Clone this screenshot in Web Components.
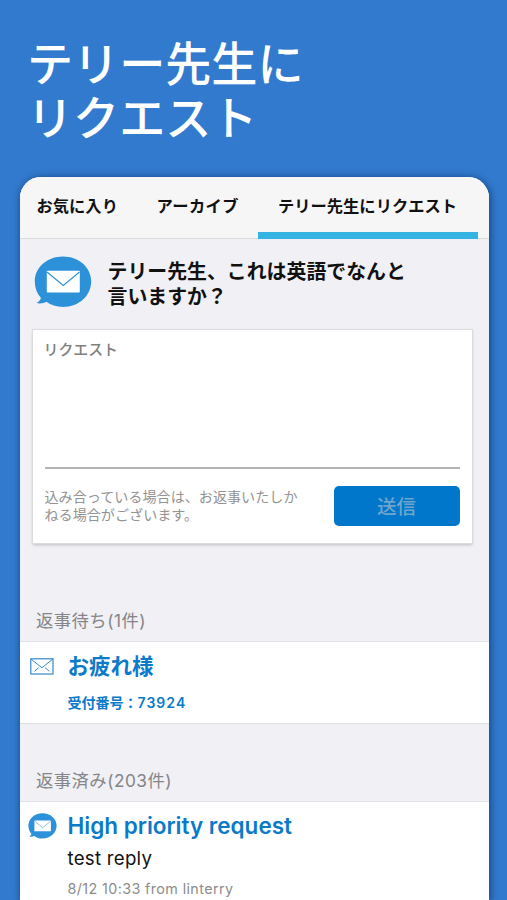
<!DOCTYPE html>
<html lang="ja">
<head>
<meta charset="utf-8">
<title>テリー先生にリクエスト</title>
<style>
html,body{margin:0;height:900px;overflow:hidden;background:#327ace}
body{font-family:Inter,"Noto Sans CJK JP",sans-serif;-webkit-font-smoothing:antialiased}
</style>
</head>
<body>
<promo-screen>
  <promo-title slot="title">テリー先生に<br>リクエスト</promo-title>
  <app-panel>
    <tab-bar slot="tabs">
      <tab-item style="margin-left:17px;width:120px">お気に入り</tab-item>
      <tab-item style="width:101px;letter-spacing:.4px">アーカイブ</tab-item>
      <tab-item active style="width:220px">テリー先生にリクエスト</tab-item>
    </tab-bar>
    <question-header>テリー先生、これは英語でなんと<br>言いますか？</question-header>
    <request-card>
      <span slot="label">リクエスト</span>
      <span slot="note">込み合っている場合は、お返事いたしか<br>ねる場合がございます。</span>
      <span slot="action">送信</span>
    </request-card>
    <reply-section style="margin-top:57px">
      <span slot="heading">返事待ち(1件)</span>
      <request-row kind="waiting">
        <span slot="name">お疲れ様</span>
        <span slot="number">受付番号：<span style="letter-spacing:1.050px">73924</span></span>
      </request-row>
    </reply-section>
    <reply-section style="margin-top:36px">
      <span slot="heading">返事済み(203件)</span>
      <request-row kind="answered">
        <span slot="name">High priority request</span>
        <span slot="reply">test reply</span>
        <span slot="meta">8/12 10:33 from linterry</span>
      </request-row>
    </reply-section>
  </app-panel>
</promo-screen>

<script>
function define(name, html) {
  const t = document.createElement('template');
  t.innerHTML = html;
  customElements.define(name, class extends HTMLElement {
    constructor() {
      super();
      this.attachShadow({mode: 'open'}).appendChild(t.content.cloneNode(true));
    }
  });
}

define('promo-screen', `
<style>:host{display:flex;flex-direction:column;height:900px;overflow:hidden;background:#327ace}</style>
<slot name="title"></slot><slot></slot>`);

define('promo-title', `
<style>:host{display:block;box-sizing:border-box;flex:none;height:177px;padding:37px 0 0 27px;color:#fff;font-size:46.100px;font-weight:500;line-height:54px;white-space:nowrap}</style>
<slot></slot>`);

define('app-panel', `
<style>
:host{display:flex;flex-direction:column;flex:1;min-height:0;width:469px;margin-left:19.5px;border-radius:21px 21px 0 0;overflow:hidden;background:#f0f0f5;box-shadow:1px 1px 7px 1px rgba(8,40,90,.6),inset 1px 0 #e7f1fb,inset -1px 0 #e7f1fb}
::slotted(*){flex:none}
</style>
<slot name="tabs"></slot><slot></slot>`);

define('tab-bar', `
<style>:host{display:flex;height:61px;background:#f6f6f6;border-bottom:1px solid #dcdcde;flex:none}</style>
<slot></slot>`);

define('tab-item', `
<style>
:host{display:block;box-sizing:border-box;height:62px;padding-top:17px;font-size:16.3px;line-height:24px;font-weight:600;color:#111;white-space:nowrap}
:host([active]){text-align:center;border-bottom:7px solid #35b3e3}
</style>
<slot></slot>`);

define('mail-bubble', `
<style>:host{display:block}svg{display:block;width:100%;height:100%}</style>
<svg viewBox="0 0 58 52">
  <path fill="#2c91d9" d="M29 .5C45 .5 57.2 11.500 57.200 25.500S45 51 29 51c-6.500 0-12.300-2-16.500-5.200-3 1.500-6.600 2-10 1.200 2.200-1.100 3.800-2.800 4.500-5C3 37.500.8 32 .8 25.500.8 11.500 13 .5 29 .5z"/>
  <rect x="12.800" y="14.800" width="33" height="21.800" rx=".8" fill="#fff"/>
  <path d="M13 16l16.300 13.500L45.500 16" fill="none" stroke="#2c91d9" stroke-width="1.100"/>
</svg>`);

define('mail-outline', `
<style>:host{display:block}svg{display:block;width:100%;height:100%}</style>
<svg viewBox="0 0 24 17" fill="none" stroke="#3488ca">
  <rect x=".8" y=".8" width="22.200" height="15.200" stroke-width="1.200"/>
  <path d="M1.200 1.200l10.700 8.600 10.800-8.600M4.500 13.300l4.300-3.700M19.300 13.300L15 9.600" stroke-width="1"/>
</svg>`);

define('question-header', `
<style>
:host{display:flex;box-sizing:border-box;align-items:flex-start;height:91px;padding:17px 0 0 14px;color:#111;font-size:19.9px;font-weight:600;line-height:25px;white-space:nowrap}
mail-bubble{width:58px;height:52px;flex:none;margin-right:16px}
div{margin-top:4px}
</style>
<mail-bubble></mail-bubble><div><slot></slot></div>`);

define('request-card', `
<style>
:host{display:block;box-sizing:border-box;width:439px;height:213px;margin:0 0 0 13px;padding:0 12px;background:#fff;box-shadow:0 0 1px 1px #dcdce0,0 2px 3px rgba(0,0,0,.22)}
.field{box-sizing:border-box;height:137px;margin:0 0 0 -1px;padding:8px 0 0;font-size:14.900px;line-height:24px;font-weight:500;color:#808080}
.rule{height:1.500px;background:#b4b4b4}
.foot{display:flex;justify-content:space-between;padding-top:17.500px}
.note{font-size:14.100px;line-height:18px;color:#939393;white-space:nowrap;padding-top:2px}
button{width:126px;height:40px;padding:0;border:0;border-radius:5px;background:#0077cb;color:#6fa5cd;font:500 19.500px/42px Inter,"Noto Sans CJK JP",sans-serif}
</style>
<div class="field"><slot name="label"></slot></div>
<div class="rule"></div>
<div class="foot"><div class="note"><slot name="note"></slot></div><button><slot name="action"></slot></button></div>`);

define('reply-section', `
<style>
:host{display:block}
.heading{height:41px;padding-left:16.500px;font-size:17.300px;letter-spacing:.5px;line-height:42px;color:#858589;white-space:nowrap}
</style>
<div class="heading"><slot name="heading"></slot></div><slot></slot>`);

customElements.define('request-row', class extends HTMLElement {
  connectedCallback() {
    if (this.shadowRoot) return;
    const waiting = this.getAttribute('kind') === 'waiting';
    this.attachShadow({mode: 'open'}).innerHTML = `
<style>
:host{display:flex;box-sizing:border-box;height:${waiting ? 83 : 130}px;background:#fff;border-top:1px solid #e2e2e7;border-bottom:1px solid #dedee2;white-space:nowrap}
.icon{width:48px;flex:none}
mail-outline{width:24px;height:17px;margin:16px 0 0 10.500px}
mail-bubble{width:29px;height:26px;margin:11px 0 0 8px}
.name{height:36px;padding-top:6px;font-size:${waiting ? 21.5 : 22.5}px;line-height:36px;font-weight:600;color:#0b7ac8}
.number{font-size:14px;line-height:24px;padding-top:7px;font-weight:600;color:#0b7ac8}
.reply{font-size:18.700px;letter-spacing:.25px;line-height:28px;padding-top:1px;color:#111}
.meta{font-size:14.300px;letter-spacing:.4px;line-height:20px;padding-top:6px;color:#8c8c8c}
</style>
<div class="icon">${waiting ? '<mail-outline></mail-outline>' : '<mail-bubble></mail-bubble>'}</div>
<div><div class="name"><slot name="name"></slot></div>
${waiting ? '<div class="number"><slot name="number"></slot></div>'
  : '<div class="reply"><slot name="reply"></slot></div><div class="meta"><slot name="meta"></slot></div>'}</div>`;
  }
});
</script>
</body>
</html>
